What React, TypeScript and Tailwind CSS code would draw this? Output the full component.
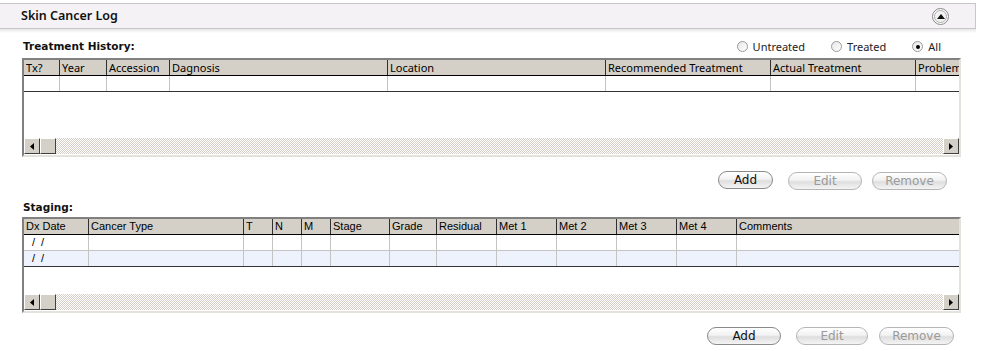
import React from "react";

const segoe = { fontFamily: '"Noto Sans", "Open Sans", sans-serif' };
const arial = { fontFamily: '"Liberation Sans", Arial, sans-serif' };
const tahoma = { fontFamily: '"DejaVu Sans", "Noto Sans", sans-serif' };

function Radio({ label, checked }: { label: string; checked?: boolean }) {
  return (
    <div className="flex items-center gap-[5px]">
      <span className="w-[11px] h-[11px] rounded-full border border-[#9a9a9a] bg-[linear-gradient(135deg,#e6e6e6,#ffffff)] flex items-center justify-center">
        {checked && <span className="w-[4px] h-[4px] rounded-full bg-black" />}
      </span>
      <span className="text-[11px] text-[#222]" style={segoe}>
        {label}
      </span>
    </div>
  );
}

function AquaButton({ label, w, disabled }: { label: string; w: number; disabled?: boolean }) {
  return (
    <div
      className={`h-[18px] rounded-full border flex items-center justify-center text-[12px] leading-none bg-[linear-gradient(#ffffff,#f2f2f2_45%,#dedede_55%,#f4f4f4)] ${
        disabled ? "border-[#b5b5b5] text-[#9a9a9a]" : "border-[#8a8a8a] text-[#111]"
      }`}
      style={{ width: w, ...tahoma }}
    >
      {label}
    </div>
  );
}

function ScrollBtn({ dir }: { dir: "l" | "r" }) {
  return (
    <div className="w-[16px] h-[16px] bg-[#d4d0c8] border-t border-l border-t-white border-l-white border-b border-r border-b-[#404040] border-r-[#404040] flex items-center justify-center">
      <svg width="4" height="7" viewBox="0 0 4 7">
        {dir === "l" ? <path d="M4 0 L0 3.5 L4 7 Z" fill="#000" /> : <path d="M0 0 L4 3.5 L0 7 Z" fill="#000" />}
      </svg>
    </div>
  );
}

function ScrollBar() {
  return (
    <div className="h-[16px] flex bg-[repeating-conic-gradient(#d4d0c8_0_25%,#ffffff_0_50%)] bg-[length:2px_2px]">
      <ScrollBtn dir="l" />
      <div className="w-[16px] h-[16px] bg-[#d4d0c8] border-t border-l border-t-white border-l-white border-b border-r border-b-[#404040] border-r-[#404040]" />
      <div className="flex-1" />
      <ScrollBtn dir="r" />
    </div>
  );
}

type Col = { label: string; w: number };

function Grid({
  cols,
  rows,
  font,
  emptyH,
  bottomPad,
}: {
  cols: Col[];
  rows: { cells: string[]; bg: string; last: boolean }[];
  font: React.CSSProperties;
  emptyH: number;
  bottomPad: number;
}) {
  return (
    <div className="border-t-2 border-l-2 border-t-[#808080] border-l-[#808080] border-r-2 border-b-2 border-r-[#e4e2dc] border-b-[#e4e2dc] overflow-hidden bg-white">
      <div className="flex h-[16px] bg-[#d4d0c8] border-b border-b-black whitespace-nowrap">
        {cols.map((c, i) => (
          <div
            key={i}
            className="shrink-0 h-full border-r border-r-[#303030] pl-[2px] text-[11px] leading-[15px] text-black overflow-hidden"
            style={{ width: c.w, ...font }}
          >
            {c.label}
          </div>
        ))}
      </div>
      {rows.map((r, ri) => (
        <div
          key={ri}
          className={`flex h-[16px] border-b ${r.last ? "border-b-[#333]" : "border-b-[#c4c4c4]"}`}
          style={{ background: r.bg }}
        >
          {cols.map((c, i) => (
            <div
              key={i}
              className="shrink-0 h-full border-r border-r-[#c4c4c4] pl-[8px] text-[11px] leading-[15px] text-black tracking-[1.5px] whitespace-pre"
              style={{ width: c.w, ...arial }}
            >
              {r.cells[i] || ""}
            </div>
          ))}
        </div>
      ))}
      <div style={{ height: emptyH }} />
      <ScrollBar />
      <div style={{ height: bottomPad }} />
    </div>
  );
}

const txCols: Col[] = [
  { label: "Tx?", w: 36 },
  { label: "Year", w: 47 },
  { label: "Accession", w: 63 },
  { label: "Dagnosis", w: 218 },
  { label: "Location", w: 218 },
  { label: "Recommended Treatment", w: 165 },
  { label: "Actual Treatment", w: 145 },
  { label: "Problem", w: 60 },
];

const stCols: Col[] = [
  { label: "Dx Date", w: 65 },
  { label: "Cancer Type", w: 155 },
  { label: "T", w: 29 },
  { label: "N", w: 29 },
  { label: "M", w: 29 },
  { label: "Stage", w: 59 },
  { label: "Grade", w: 47 },
  { label: "Residual", w: 60 },
  { label: "Met 1", w: 60 },
  { label: "Met 2", w: 60 },
  { label: "Met 3", w: 60 },
  { label: "Met 4", w: 60 },
  { label: "Comments", w: 240 },
];

export default function App() {
  return (
    <div className="w-[981px] h-[351px] bg-white overflow-hidden relative">
      {/* header bar */}
      <div className="mt-[3px] w-[976px] h-[26px] bg-[#f5f2f6] border-t border-b border-r border-[#c9c6cb] flex items-center justify-between pl-[21px] pr-[26px]">
        <span className="text-[12.5px] font-semibold text-[#111]" style={segoe}>
          Skin Cancer Log
        </span>
        <div className="w-[17px] h-[17px] rounded-full border border-[#8a8a8a] bg-[#f3f3f3] flex items-center justify-center shadow-[inset_0_0_0_1px_#ffffff]">
          <div className="w-[13px] h-[13px] rounded-full border border-[#b0b0b0] flex items-center justify-center">
            <svg width="8" height="5" viewBox="0 0 8 5">
              <path d="M0 5 L4 0 L8 5 Z" fill="#111" />
            </svg>
          </div>
        </div>
      </div>
      <div className="w-[976px] h-[4px] bg-[linear-gradient(#e6e6e6,#ffffff)]" />

      <div className="pl-[22px] pr-[20px]">
        {/* treatment history label + radios */}
        <div className="flex items-end justify-between h-[25px] pb-[3px]">
          <span className="text-[10.5px] font-bold text-[#111] pl-[1px]" style={tahoma}>
            Treatment History:
          </span>
          <div className="flex items-center gap-[26px] pr-[20px]">
            <Radio label="Untreated" />
            <Radio label="Treated" />
            <Radio label="All" checked />
          </div>
        </div>

        <Grid
          cols={txCols}
          rows={[{ cells: [], bg: "#ffffff", last: true }]}
          font={segoe}
          emptyH={46}
          bottomPad={1}
        />

        <div className="flex justify-end items-start mt-[14px] pr-[14px]">
          <AquaButton label="Add" w={55} />
          <div className="ml-[15px] mt-[1px]">
            <AquaButton label="Edit" w={74} disabled />
          </div>
          <div className="ml-[10px] mt-[1px]">
            <AquaButton label="Remove" w={75} disabled />
          </div>
        </div>

        <div
          className="mt-[9px] h-[16px] text-[10.5px] leading-[16px] font-bold text-[#111] pl-[1px]"
          style={tahoma}
        >
          Staging:
        </div>

        <div className="mt-[2px]">
          <Grid
            cols={stCols}
            rows={[
              { cells: ["/ /"], bg: "#ffffff", last: false },
              { cells: ["/ /"], bg: "#eef2fd", last: true },
            ]}
            font={arial}
            emptyH={27}
            bottomPad={1}
          />
        </div>

        <div className="flex justify-end mt-[14px] pr-[7px]">
          <AquaButton label="Add" w={74} />
          <div className="ml-[15px]">
            <AquaButton label="Edit" w={72} disabled />
          </div>
          <div className="ml-[11px]">
            <AquaButton label="Remove" w={75} disabled />
          </div>
        </div>
      </div>
    </div>
  );
}
